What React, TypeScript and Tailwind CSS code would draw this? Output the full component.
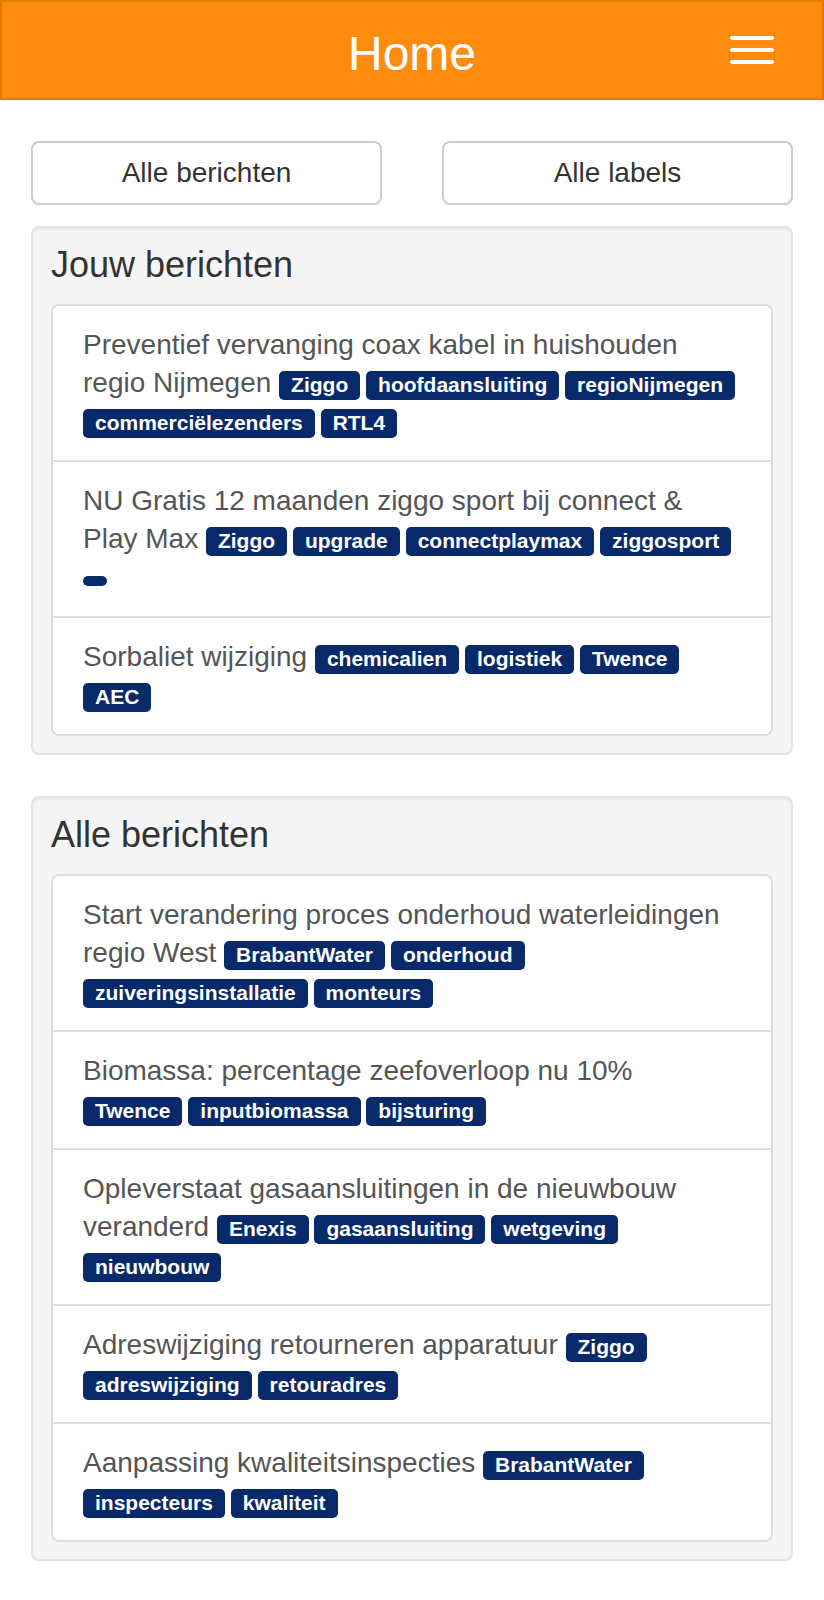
import React from 'react';

type Bericht = {
    title: string;
    labels: string[];
};

const jouwBerichten: Bericht[] = [
    {
        title: 'Preventief vervanging coax kabel in huishouden regio Nijmegen',
        labels: ['Ziggo', 'hoofdaansluiting', 'regioNijmegen', 'commerciëlezenders', 'RTL4'],
    },
    {
        title: 'NU Gratis 12 maanden ziggo sport bij connect & Play Max',
        labels: ['Ziggo', 'upgrade', 'connectplaymax', 'ziggosport', ''],
    },
    {
        title: 'Sorbaliet wijziging',
        labels: ['chemicalien', 'logistiek', 'Twence', 'AEC'],
    },
];

const alleBerichten: Bericht[] = [
    {
        title: 'Start verandering proces onderhoud waterleidingen regio West',
        labels: ['BrabantWater', 'onderhoud', 'zuiveringsinstallatie', 'monteurs'],
    },
    {
        title: 'Biomassa: percentage zeefoverloop nu 10%',
        labels: ['Twence', 'inputbiomassa', 'bijsturing'],
    },
    {
        title: 'Opleverstaat gasaansluitingen in de nieuwbouw veranderd',
        labels: ['Enexis', 'gasaansluiting', 'wetgeving', 'nieuwbouw'],
    },
    {
        title: 'Adreswijziging retourneren apparatuur',
        labels: ['Ziggo', 'adreswijziging', 'retouradres'],
    },
    {
        title: 'Aanpassing kwaliteitsinspecties',
        labels: ['BrabantWater', 'inspecteurs', 'kwaliteit'],
    },
];

function Label({ text }: { text: string }) {
    return (
        <span className="inline-block rounded-[5px] bg-[#082a6b] px-[12px] pt-[4px] pb-[6px] text-[21px] leading-[19px] font-bold text-white align-baseline">
            {text}
        </span>
    );
}

function BerichtItem({ bericht, first }: { bericht: Bericht; first: boolean }) {
    return (
        <a
            href="#"
            className={
                'block bg-white pl-[30px] pr-[35px] py-[20px] text-[28px] leading-[38px] text-[#555] border-[#ddd] ' +
                (first ? '' : 'border-t-2')
            }
        >
            {bericht.title}{' '}
            <span className="text-[21px] leading-[19px]">
                {bericht.labels.map((label, i) => (
                    <React.Fragment key={i}>
                        <Label text={label} />
                        {i < bericht.labels.length - 1 ? ' ' : ''}
                    </React.Fragment>
                ))}
            </span>
        </a>
    );
}

function Panel({ title, berichten }: { title: string; berichten: Bericht[] }) {
    return (
        <div className="rounded-[8px] border-2 border-[#e3e3e3] bg-[#f5f5f5] px-[18px] pt-[17px] pb-[17px] shadow-[inset_0_2px_2px_rgba(0,0,0,0.05)]">
            <h3 className="mb-[19px] text-[36px] leading-[40px] text-[#333]">{title}</h3>
            <div className="overflow-hidden rounded-[8px] border-2 border-[#ddd] bg-white">
                {berichten.map((b, i) => (
                    <BerichtItem key={i} bericht={b} first={i === 0} />
                ))}
            </div>
        </div>
    );
}

export default function App() {
    return (
        <div className="min-h-[1600px] bg-white" style={{ fontFamily: '"Liberation Sans", Arial, sans-serif' }}>
            {/* navbar */}
            <div className="grid h-[100px] grid-cols-[1fr_auto_1fr] items-center border-2 border-[#e27c00] bg-[#fd8c0e]">
                <div />
                <h1 className="pt-[7px] text-[48px] leading-[54px] text-white">Home</h1>
                <div className="flex justify-end pr-[48px]">
                    <button type="button" className="flex flex-col gap-[8px] py-[1px]">
                        <span className="block h-[4px] w-[44px] rounded-[2px] bg-white" />
                        <span className="block h-[4px] w-[44px] rounded-[2px] bg-white" />
                        <span className="block h-[4px] w-[44px] rounded-[2px] bg-white" />
                    </button>
                </div>
            </div>

            <div className="px-[31px] pt-[41px]">
                <div className="grid grid-cols-2 gap-[60px]">
                    <button type="button" className="h-[64px] rounded-[8px] border-2 border-[#ccc] bg-white text-[28px] text-[#333]">
                        Alle berichten
                    </button>
                    <button type="button" className="h-[64px] rounded-[8px] border-2 border-[#ccc] bg-white text-[28px] text-[#333]">
                        Alle labels
                    </button>
                </div>

                <div className="mt-[21px] flex flex-col gap-[41px]">
                    <Panel title="Jouw berichten" berichten={jouwBerichten} />
                    <Panel title="Alle berichten" berichten={alleBerichten} />
                </div>
            </div>
        </div>
    );
}
